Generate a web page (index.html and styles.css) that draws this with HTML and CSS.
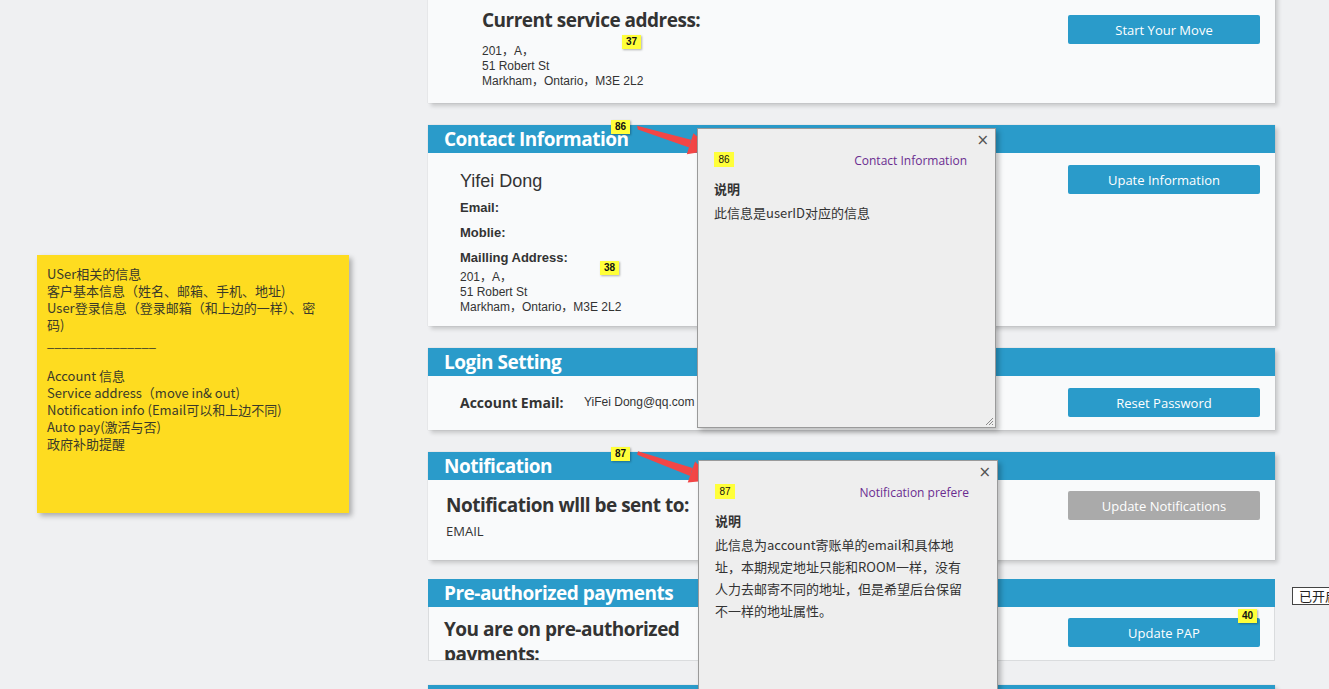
FILE: index.html
```html
<!DOCTYPE html>
<html lang="zh-CN">
<head>
<meta charset="utf-8">
<title>Account Overview</title>
<link rel="stylesheet" href="styles.css">
</head>
<body>
<div class="canvas">
  <aside class="note">
    <p>USer相关的信息</p>
    <p>客户基本信息（姓名、邮箱、手机、地址)</p>
    <p>User登录信息（登录邮箱（和上边的一样）、密</p>
    <p>码)</p>
    <p class="rule">_______________</p>
    <p>&nbsp;</p>
    <p>Account 信息</p>
    <p>Service address（move in&amp; out)</p>
    <p>Notification info (Email可以和上边不同)</p>
    <p>Auto pay(激活与否)</p>
    <p>政府补助提醒</p>
  </aside>

  <main class="column">
    <section class="card card-service">
      <div class="card-body body-service">
        <div class="info info-service">
          <h3 class="big-title">Current service address:</h3>
          <p class="addr">201，A，<br>51 Robert St<br>Markham，Ontario，M3E 2L2</p>
        </div>
        <button class="btn btn-service">Start Your Move</button>
      </div>
    </section>

    <section class="card card-contact">
      <header class="card-head"><h2>Contact Information</h2></header>
      <div class="card-body body-contact">
        <div class="info info-contact">
          <p class="person">Yifei Dong</p>
          <p class="label">Email:</p>
          <p class="label">Moblie:</p>
          <p class="label">Mailling Address:</p>
          <p class="addr">201，A，<br>51 Robert St<br>Markham，Ontario，M3E 2L2</p>
        </div>
        <button class="btn btn-contact">Upate Information</button>
      </div>
    </section>

    <section class="card card-login">
      <header class="card-head"><h2>Login Setting</h2></header>
      <div class="card-body body-login">
        <div class="info info-login">
          <span class="field-label">Account Email:</span>
          <span class="field-value">YiFei Dong@qq.com</span>
        </div>
        <button class="btn btn-login">Reset Password</button>
      </div>
    </section>

    <section class="card card-notify">
      <header class="card-head"><h2>Notification</h2></header>
      <div class="card-body body-notify">
        <div class="info info-notify">
          <h3 class="big-title">Notification wlll be sent to:</h3>
          <p class="plain">EMAIL</p>
        </div>
        <button class="btn btn-disabled btn-notify">Update Notifications</button>
      </div>
    </section>

    <section class="card card-pap">
      <header class="card-head"><h2>Pre-authorized payments</h2></header>
      <div class="card-body body-pap">
        <div class="info info-pap">
          <h3 class="big-title wrap-title">You are on pre-authorized payments:</h3>
        </div>
        <button class="btn btn-pap">Update PAP</button>
      </div>
    </section>

    <section class="card card-next">
      <header class="card-head"><h2>&nbsp;</h2></header>
      <div class="card-body body-next"></div>
    </section>
  </main>

  <span class="status-tag">已开启</span>

  <!-- annotation pins -->
  <span class="pin pin-37">37</span>
  <span class="pin pin-86">86</span>
  <span class="pin pin-38">38</span>
  <span class="pin pin-87">87</span>
  <span class="pin pin-40">40</span>

  <svg class="arrows" width="1329" height="689" viewBox="0 0 1329 689" aria-hidden="true">
    <polygon points="637,125.8 637.9,129.6 689.2,147.6 691,139.8" fill="#f24646"/>
    <polygon points="713,150 693.4,133.3 686.8,154.3" fill="#f24646"/>
    <polygon points="638,451.2 637.2,454.8 690.2,476 692.6,468" fill="#f24646"/>
    <polygon points="714,480 695.1,461.6 687.7,482.4" fill="#f24646"/>
  </svg>

  <div class="popup popup-contact">
    <div class="popup-head">
      <span class="popup-pin">86</span>
      <span class="popup-title">Contact Information</span>
    </div>
    <h4 class="popup-sub">说明</h4>
    <p class="popup-text">此信息是userID对应的信息</p>
    <span class="popup-close">×</span>
    <svg class="grip" width="10" height="10" viewBox="0 0 10 10" aria-hidden="true">
      <path d="M9 2 L2 9 M9 5 L5 9 M9 8 L8 9" stroke="#8a8a8a" stroke-width="1" fill="none"/>
    </svg>
  </div>

  <div class="popup popup-notify">
    <div class="popup-head">
      <span class="popup-pin">87</span>
      <span class="popup-title">Notification prefere</span>
    </div>
    <h4 class="popup-sub">说明</h4>
    <p class="popup-text multi">此信息为account寄账单的email和具体地<br>址，本期规定地址只能和ROOM一样，没有<br>人力去邮寄不同的地址，但是希望后台保留<br>不一样的地址属性。</p>
    <span class="popup-close">×</span>
  </div>
</div>
</body>
</html>
```

FILE: styles.css
```css
html, body {
  margin: 0;
  padding: 0;
  width: 100%;
  height: 100%;
  overflow: hidden;
}

body {
  background: #eff0f2;
  font-family: "Open Sans", "Noto Sans CJK SC", sans-serif;
  color: #333;
}

p, h2, h3, h4 {
  margin: 0;
}

.canvas {
  position: relative;
  width: 1329px;
  height: 689px;
  box-sizing: border-box;
  padding-left: 37px;
  display: flex;
  align-items: flex-start;
  overflow: hidden;
}

/* sticky note */
.note {
  flex: none;
  width: 312px;
  height: 258px;
  margin-top: 255px;
  box-sizing: border-box;
  padding: 10px 10px 0 10px;
  background: #fedc20;
  box-shadow: 3px 3px 5px rgba(0, 0, 0, 0.28);
  font-family: "Noto Sans CJK SC", sans-serif;
  font-size: 13px;
  line-height: 17px;
  color: #3a3a2a;
  white-space: nowrap;
}

/* main column */
.column {
  flex: none;
  width: 847px;
  margin-left: 79px;
  margin-top: -20px;
  display: flex;
  flex-direction: column;
}

.card {
  background: #f9fafb;
  box-shadow: 0 0 1px rgba(0, 0, 0, 0.18), 3px 3px 4px rgba(0, 0, 0, 0.17);
}

.card-head {
  height: 28px;
  background: #2a9bca;
  padding-left: 16px;
}

.card-head h2 {
  font-size: 19px;
  line-height: 28px;
  font-weight: 700;
  color: #fff;
  letter-spacing: -0.5px;
}

.card-body {
  display: flex;
  justify-content: space-between;
  align-items: flex-start;
  box-sizing: border-box;
}

.btn {
  flex: none;
  width: 192px;
  height: 29px;
  margin-right: 15px;
  border: none;
  border-radius: 2px;
  background: #2a9bca;
  color: #fff;
  font-family: "Open Sans", sans-serif;
  font-size: 13px;
  padding: 0;
}

.btn-disabled {
  background: #aaaaaa;
}

.big-title {
  font-size: 19px;
  line-height: 26px;
  font-weight: 700;
  color: #333;
  letter-spacing: -0.5px;
}

.addr {
  font-family: "Liberation Sans", Arial, "Noto Sans CJK SC", sans-serif;
  font-size: 12px;
  line-height: 15px;
  color: #333;
}

/* card 1 */
.body-service {
  height: 123px;
}

.info-service {
  padding-left: 54px;
  padding-top: 27px;
}

.info-service .addr {
  margin-top: 11px;
}

.btn-service {
  margin-top: 35px;
}

/* card 2 */
.card-contact {
  margin-top: 22px;
}

.body-contact {
  height: 173px;
}

.info-contact {
  padding-left: 32px;
  padding-top: 17px;
}

.person {
  font-family: "Liberation Sans", Arial, sans-serif;
  font-size: 18px;
  line-height: 22px;
  color: #333;
  margin-bottom: 3px;
}

.label {
  font-family: "Liberation Sans", Arial, sans-serif;
  font-size: 13px;
  font-weight: 700;
  line-height: 25px;
  color: #333;
}

.btn-contact {
  margin-top: 12px;
}

/* card 3 */
.card-login {
  margin-top: 22px;
}

.body-login {
  height: 54px;
}

.info-login {
  padding-left: 32px;
  padding-top: 16px;
  display: flex;
  align-items: center;
  height: 20px;
}

.field-label {
  width: 124px;
  font-size: 14px;
  font-weight: 700;
  color: #333;
}

.field-value {
  font-family: "Liberation Sans", Arial, sans-serif;
  font-size: 12px;
  color: #333;
}

.btn-login {
  margin-top: 12px;
}

/* card 4 */
.card-notify {
  margin-top: 22px;
}

.body-notify {
  height: 80px;
}

.info-notify {
  padding-left: 18px;
  padding-top: 12px;
}

.plain {
  margin-top: 4px;
  font-size: 13px;
  line-height: 18px;
  color: #333;
}

.btn-notify {
  margin-top: 11px;
}

/* card 5 */
.card-pap {
  margin-top: 19px;
  box-shadow: none;
  border: 1px solid #dadcde;
  border-top: none;
}

.card-pap .card-head {
  margin: 0 -1px;
}

.body-pap {
  height: 53px;
  overflow: hidden;
}

.info-pap {
  padding-left: 15px;
  padding-top: 10px;
}

.wrap-title {
  width: 280px;
  line-height: 25px;
}

.btn-pap {
  margin-top: 11px;
  margin-right: 14px;
}

/* card 6 */
.card-next {
  margin-top: 24px;
}

.body-next {
  height: 40px;
}

/* status tag */
.status-tag {
  flex: none;
  margin-left: 17px;
  margin-top: 587px;
  height: 18px;
  box-sizing: border-box;
  border: 1px solid #444;
  background: #fff;
  padding: 0 6px;
  font-family: "Noto Sans CJK SC", sans-serif;
  font-size: 13px;
  line-height: 15px;
  color: #222;
  white-space: nowrap;
}

/* annotation pins */
.pin {
  position: absolute;
  width: 19px;
  height: 14px;
  background: #ffff3a;
  box-shadow: 1px 1px 2px rgba(0, 0, 0, 0.3);
  font-family: "Liberation Sans", Arial, sans-serif;
  font-size: 10px;
  font-weight: 700;
  line-height: 14px;
  text-align: center;
  color: #111;
}

.pin-37 { left: 622px; top: 35px; }
.pin-86 { left: 611px; top: 120px; }
.pin-38 { left: 600px; top: 261px; }
.pin-87 { left: 611px; top: 447px; }
.pin-40 { left: 1238px; top: 609px; }

.arrows {
  position: absolute;
  left: 0;
  top: 0;
  pointer-events: none;
}

/* popups */
.popup {
  position: absolute;
  box-sizing: border-box;
  background: #eeeeee;
  border: 1px solid #9a9a9a;
  box-shadow: 3px 3px 5px rgba(0, 0, 0, 0.25);
  padding: 22px 28px 0 16px;
}

.popup-contact {
  left: 697px;
  top: 128px;
  width: 299px;
  height: 300px;
}

.popup-notify {
  left: 698px;
  top: 460px;
  width: 300px;
  height: 250px;
}

.popup-head {
  display: flex;
  justify-content: space-between;
  align-items: center;
  height: 16px;
}

.popup-pin {
  width: 20px;
  height: 15px;
  background: #ffff3a;
  font-family: "Liberation Sans", Arial, sans-serif;
  font-size: 10px;
  line-height: 15px;
  text-align: center;
  color: #111;
}

.popup-title {
  font-size: 12px;
  color: #6a2c90;
  margin-top: 3px;
}

.popup-sub {
  margin-top: 12px;
  font-family: "Noto Sans CJK SC", sans-serif;
  font-size: 13px;
  font-weight: 700;
  line-height: 20px;
  color: #333;
}

.popup-text {
  margin-top: 3px;
  font-family: "Noto Sans CJK SC", sans-serif;
  font-size: 13px;
  line-height: 22px;
  color: #333;
  white-space: nowrap;
}

.popup-close {
  position: absolute;
  right: 6px;
  top: 3px;
  font-family: "DejaVu Sans", sans-serif;
  font-size: 15px;
  line-height: 16px;
  color: #555;
}

.grip {
  position: absolute;
  right: 1px;
  bottom: 1px;
}
```
